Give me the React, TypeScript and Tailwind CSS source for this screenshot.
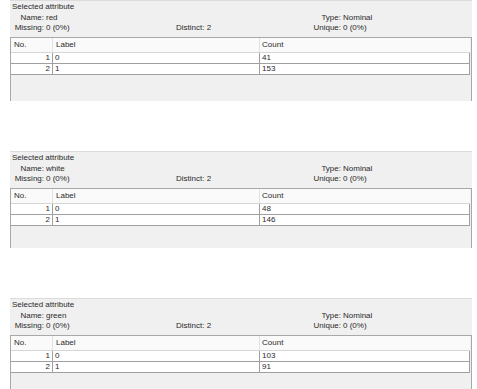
import React from "react";

type P = { name: string; rows: [string, string][] };

const panels: P[] = [
  { name: "red", rows: [["0", "41"], ["1", "153"]] },
  { name: "white", rows: [["0", "48"], ["1", "146"]] },
  { name: "green", rows: [["0", "103"], ["1", "91"]] },
];

function Panel({ p, h }: { p: P; h: string }) {
  return (
    <div className={`ml-[10px] w-[462px] ${h} bg-[#f0f0f0] border-t border-[#dcdcdc] flex flex-col`}>
      <div className="h-[12px] leading-[12px] pl-[2px]">Selected attribute</div>
      <div className="flex h-[20px]">
        <div className="grid grid-cols-[34px_auto] gap-x-[2px] leading-[10px] w-[166px]">
          <div className="text-right">Name:</div>
          <div>{p.name}</div>
          <div className="text-right">Missing:</div>
          <div>0 (0%)</div>
        </div>
        <div className="flex flex-col leading-[10px] w-[136px]">
          <div className="h-[10px]"></div>
          <div>Distinct: 2</div>
        </div>
        <div className="grid grid-cols-[29px_auto] gap-x-[2px] leading-[10px]">
          <div className="text-right">Type:</div>
          <div>Nominal</div>
          <div className="text-right">Unique:</div>
          <div>0 (0%)</div>
        </div>
      </div>
      <div className="mt-[4px] flex-1 border-l border-r border-t border-[#a8a8a8] flex flex-col">
        <div className="flex h-[15px] bg-[#fafafa] border-b border-[#d6d6d6] leading-[14px] w-[459px]">
          <div className="w-[42px] pl-[3px] border-r border-[#e2e2e2]">No.</div>
          <div className="w-[207px] pl-[3px] border-r border-[#e2e2e2]">Label</div>
          <div className="flex-1 pl-[2px]">Count</div>
        </div>
        {p.rows.map((r, i) => (
          <div key={i} className="flex h-[11px] bg-white border-b border-[#a0a0a0] leading-[10px] w-[459px] border-r">
            <div className="w-[42px] pr-[2px] text-right border-r border-[#a0a0a0]">{i + 1}</div>
            <div className="w-[207px] pl-[2px] border-r border-[#a0a0a0]">{r[0]}</div>
            <div className="flex-1 pl-[2px]">{r[1]}</div>
          </div>
        ))}
        <div className="flex-1"></div>
      </div>
    </div>
  );
}

export default function App() {
  return (
    <div
      className="w-[477px] h-[389px] bg-white overflow-hidden text-[8px] text-[#2a2a2a]"
      style={{ fontFamily: '"Liberation Sans", Arial, sans-serif' }}
    >
      <Panel p={panels[0]} h="h-[101px]" />
      <div className="h-[50px]" />
      <Panel p={panels[1]} h="h-[97px]" />
      <div className="h-[50px]" />
      <Panel p={panels[2]} h="h-[91px]" />
    </div>
  );
}
